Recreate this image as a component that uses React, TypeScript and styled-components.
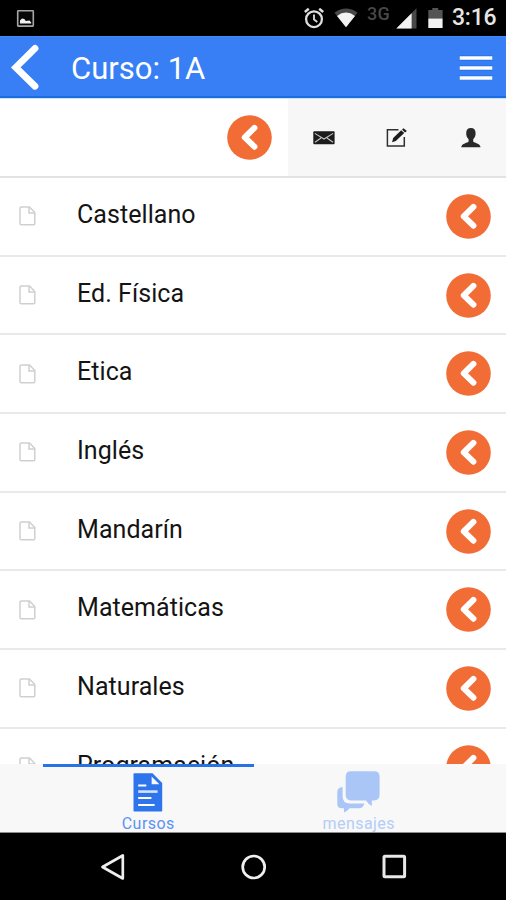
import React from "react";
import styled, { createGlobalStyle } from "styled-components";

const GlobalStyle = createGlobalStyle`
  *, *::before, *::after { box-sizing: border-box; }
  body { margin: 0; background: #fff; font-family: Roboto, "Liberation Sans", sans-serif; }
  svg { display: block; flex: none; }
`;

const Screen = styled.div`
  width: 506px;
  height: 900px;
  display: flex;
  flex-direction: column;
  overflow: hidden;
  background: #fff;
`;

const StatusBar = styled.header`
  flex: none;
  height: 36px;
  padding: 0 11px 0 16px;
  display: flex;
  align-items: center;
  justify-content: space-between;
  background: #000;
`;

const StatusIcons = styled.div`
  display: flex;
  align-items: center;
`;

const Gap = styled.span<{ $w: number }>`
  flex: none;
  width: ${(p) => p.$w}px;
`;

const Network = styled.span`
  width: 24px;
  height: 25px;
  margin-left: 9px;
  font-size: 18px;
  line-height: 16px;
  letter-spacing: 0.2px;
  font-weight: 500;
  color: #484848;
`;

const Clock = styled.span`
  width: 43px;
  margin-left: 9px;
  font-size: 23px;
  line-height: 36px;
  font-weight: 500;
  letter-spacing: -0.2px;
  color: #e6e6e6;
  white-space: nowrap;
`;

const TitleBar = styled.div`
  flex: none;
  height: 62px;
  padding: 0 13px 0 10px;
  display: flex;
  align-items: center;
  background: #387ef5;
  border-top: 1px solid #4688fa;
  border-bottom: 2px solid #1d6de2;
`;

const Title = styled.h1`
  flex: 1;
  margin: 4px 0 0 32px;
  font-size: 31px;
  line-height: 40px;
  font-weight: 400;
  color: #fff;
`;

const ActionRow = styled.div`
  flex: none;
  height: 80px;
  display: flex;
  border-top: 1px solid #cfe2fb;
  border-bottom: 2px solid #e2e2e2;
`;

const ActionLead = styled.div`
  width: 288px;
  padding: 0 16px 0 0;
  display: flex;
  align-items: center;
  justify-content: flex-end;
`;

const ActionPanel = styled.div`
  flex: 1;
  display: grid;
  grid-template-columns: 72px 74px 72px;
  align-items: center;
  justify-items: center;
  background: #f7f7f7;
`;

const CourseList = styled.main`
  flex: 1;
  min-height: 0;
  overflow: hidden;
`;

const CourseItem = styled.div`
  height: 78.7px;
  padding: 0 15px 0 19px;
  display: flex;
  align-items: center;
  border-bottom: 2px solid #e9e9e9;
`;

const CourseName = styled.span`
  flex: 1;
  margin: 0 0 3px 41px;
  font-size: 25px;
  line-height: 36px;
  letter-spacing: 0.06px;
  color: #141414;
`;

const TabBar = styled.nav`
  flex: none;
  height: 69px;
  padding: 0 42px 0 43px;
  display: flex;
  background: #f8f8f8;
  border-bottom: 1px solid #8c8c8c;
`;

const Tab = styled.div<{ $active?: boolean }>`
  flex: 1;
  display: flex;
  flex-direction: column;
  align-items: center;
  border-top: 3px solid ${(p) => (p.$active ? "#2872e8" : "transparent")};
  color: ${(p) => (p.$active ? "#5c92f6" : "#b3cdf9")};
`;

const TabLabel = styled.span`
  font-size: 16px;
  line-height: 21px;
  letter-spacing: 0.45px;
`;

const NavBar = styled.footer`
  flex: none;
  height: 67px;
  display: flex;
  align-items: center;
  justify-content: space-between;
  padding: 0 99px 0 100px;
  background: #000;
`;

const CircleBack = () => (
  <svg width="45" height="45" viewBox="0 0 45 45">
    <circle cx="22.5" cy="22.5" r="22.3" fill="#f26c36" />
    <path d="M27.4 12.9 L17.8 22.4 L27.4 31.7" fill="none" stroke="#fff" strokeWidth="6" strokeLinecap="round" strokeLinejoin="round" />
  </svg>
);

const PageIcon = () => (
  <svg width="17" height="20" viewBox="0 0 17 20" fill="none" stroke="#cfcfcf" strokeWidth="1.5">
    <path d="M2.5 1 H10.5 L15.8 6.5 V17.5 Q15.8 18.8 14.5 18.8 H2.3 Q1 18.8 1 17.5 V2.3 Q1 1 2.5 1 Z" />
    <path d="M10 1.3 V7 H15.6" />
  </svg>
);

const PictureIcon = () => (
  <svg width="19" height="19" viewBox="0 0 19 19">
    <rect x="1.7" y="1.7" width="15.6" height="15.4" rx="0.6" fill="#080808" stroke="#a6a6a6" strokeWidth="1.6" />
    <path d="M4 14.5 V11.5 L6 9.6 L8.3 10 L9.8 12 L13.5 11.6 L15.2 13.4 V14.5 Z" fill="#f2f2f2" />
  </svg>
);

const AlarmIcon = () => (
  <svg width="22" height="22" viewBox="0 0 22 22" fill="none" stroke="#dedede">
    <circle cx="11" cy="12.2" r="7.9" strokeWidth="2.3" />
    <path d="M11 7.5 V12.6 L14.3 15" strokeWidth="1.8" />
    <path d="M1.8 5 L5.8 1.7 M20.2 5 L16.2 1.7" strokeWidth="2.4" />
  </svg>
);

const WifiIcon = () => (
  <svg width="24" height="20" viewBox="0 0 24 20">
    <path d="M0.5 4.7 Q12 -3.7 23.5 4.7 L12 19.2 Z" fill="#484848" />
    <path d="M3 8 Q12 1.2 21 8 L12 19.3 Z" fill="#f2f2f2" />
  </svg>
);

const SignalIcon = () => (
  <svg width="21" height="21" viewBox="0 0 21 21">
    <path d="M20.5 0.3 V20.5 H0.3 Z" fill="#484848" />
    <path d="M15.6 5.2 V20.5 H0.3 Z" fill="#f2f2f2" />
  </svg>
);

const BatteryIcon = () => (
  <svg width="15" height="20" viewBox="0 0 15 20">
    <path d="M4.3 0 H10.2 V2 H14.6 V11 H0.3 V2 H4.3 Z" fill="#545454" />
    <path d="M0.3 10.6 H14.6 V20 H0.3 Z" fill="#f2f2f2" />
  </svg>
);

const BackIcon = () => (
  <svg width="29" height="46" viewBox="0 0 29 46">
    <path d="M25 4.4 L5.8 23.4 L25 42.2" fill="none" stroke="#fff" strokeWidth="6.8" strokeLinecap="round" />
  </svg>
);

const MenuIcon = () => (
  <svg width="34" height="26" viewBox="0 0 34 26">
    <path d="M0.5 4 H33.5 M0.5 14 H33.5 M0.5 24 H33.5" stroke="#1f6de8" strokeWidth="5" />
    <path d="M0.7 4 H33.3 M0.7 14 H33.3 M0.7 24 H33.3" stroke="#fff" strokeWidth="3.3" />
  </svg>
);

const MailIcon = () => (
  <svg width="22" height="14" viewBox="0 0 22 14">
    <rect x="0.3" y="0.2" width="21.3" height="13" rx="1" fill="#1c1c1c" />
    <path d="M1.8 2.4 L11 8 L20.2 2.4 M2 11.2 L8 7 M20 11.2 L14 7" fill="none" stroke="#c4c4c4" strokeWidth="1.1" />
  </svg>
);

const EditIcon = () => (
  <svg width="22" height="20" viewBox="0 0 22 20">
    <path d="M12.5 1.8 H1.4 V17.9 H18.3 V9" fill="none" stroke="#303030" strokeWidth="1.5" />
    <path d="M6 14.2 L7.2 10.1 L15.2 2.2 L18.2 5 L9.8 13 Z" fill="#1c1c1c" />
    <path d="M16 1.6 L17.6 0.2 L20.8 3 L19 4.6 Z" fill="#1c1c1c" />
  </svg>
);

const UserIcon = () => (
  <svg width="21" height="20" viewBox="0 0 21 20">
    <path
      d="M10.9 0 C13.9 0 15.7 1.9 15.6 5.3 C15.6 8.1 14.7 10 13.2 11.2 V13.4 C14 14.8 20.1 15.1 20.6 19.2 H1.2 C1.7 15.1 7.8 14.8 8.6 13.4 V11.2 C7.1 10 6.2 8.1 6.2 5.3 C6.1 1.9 7.9 0 10.9 0 Z"
      fill="#2a2a2a"
    />
  </svg>
);

const CoursesIcon = () => (
  <svg width="30" height="46" viewBox="0 0 30 46">
    <path d="M1.5 6.3 H19.5 L29.2 16 V43.8 Q29.2 44.6 28.4 44.6 H1.3 Q0.5 44.6 0.5 43.8 V7.3 Q0.5 6.3 1.5 6.3 Z" fill="#2e74ec" />
    <path d="M18.6 9.6 V17.3 H26.4 Z" fill="#f8f8f8" />
    <path d="M5.2 18.5 H13.3 M5.2 31 H18.4 M5.2 37.9 H21.6" stroke="#fff" strokeWidth="2" />
    <path d="M5.2 24.6 H24.6" stroke="#d3e2fc" strokeWidth="2.6" />
  </svg>
);

const MessagesIcon = () => (
  <svg width="43" height="46" viewBox="0 0 43 46" fill="#a9c6f6">
    <path d="M14 4.2 H37 Q42.6 4.2 42.6 9.5 V28 Q42.6 33.4 37 33.4 H34.8 V38.9 Q31.5 37.4 29 33.4 H14 Q8.7 33.4 8.7 28 V9.5 Q8.7 4.2 14 4.2 Z" />
    <path d="M5.6 20 Q0.3 20.5 0.3 25 V36.9 Q0.3 41.3 5 41.3 H7 V45.4 Q10.5 44.2 12.5 41.3 H22.5 Q26.5 40.7 27.3 36.6 H12.5 Q5.6 36.2 5.6 29.5 Z" />
  </svg>
);

const NavBackIcon = () => (
  <svg width="26" height="28" viewBox="0 0 26 28">
    <path d="M2.5 14 L22.8 2.5 V25.5 Z" fill="none" stroke="#efefef" strokeWidth="2.7" strokeLinejoin="round" />
  </svg>
);

const NavHomeIcon = () => (
  <svg width="26" height="26" viewBox="0 0 26 26">
    <circle cx="12.7" cy="13" r="11" fill="none" stroke="#efefef" strokeWidth="2.7" />
  </svg>
);

const NavRecentIcon = () => (
  <svg width="25" height="25" viewBox="0 0 25 25">
    <rect x="2" y="2.2" width="20.6" height="20.6" rx="1" fill="none" stroke="#e8e8e8" strokeWidth="3" />
  </svg>
);

const courses = [
  "Castellano",
  "Ed. Física",
  "Etica",
  "Inglés",
  "Mandarín",
  "Matemáticas",
  "Naturales",
  "Programación",
];

export default function App() {
  return (
    <>
      <GlobalStyle />
      <Screen>
        <StatusBar>
          <PictureIcon />
          <StatusIcons>
            <AlarmIcon />
            <Gap $w={9} />
            <WifiIcon />
            <Network>3G</Network>
            <Gap $w={5} />
            <SignalIcon />
            <Gap $w={11} />
            <BatteryIcon />
            <Clock>3:16</Clock>
          </StatusIcons>
        </StatusBar>
        <TitleBar>
          <BackIcon />
          <Title>Curso: 1A</Title>
          <MenuIcon />
        </TitleBar>
        <ActionRow>
          <ActionLead>
            <CircleBack />
          </ActionLead>
          <ActionPanel>
            <MailIcon />
            <EditIcon />
            <UserIcon />
          </ActionPanel>
        </ActionRow>
        <CourseList>
          {courses.map((name) => (
            <CourseItem key={name}>
              <PageIcon />
              <CourseName>{name}</CourseName>
              <CircleBack />
            </CourseItem>
          ))}
        </CourseList>
        <TabBar>
          <Tab $active>
            <CoursesIcon />
            <TabLabel>Cursos</TabLabel>
          </Tab>
          <Tab>
            <MessagesIcon />
            <TabLabel>mensajes</TabLabel>
          </Tab>
        </TabBar>
        <NavBar>
          <NavBackIcon />
          <NavHomeIcon />
          <NavRecentIcon />
        </NavBar>
      </Screen>
    </>
  );
}
